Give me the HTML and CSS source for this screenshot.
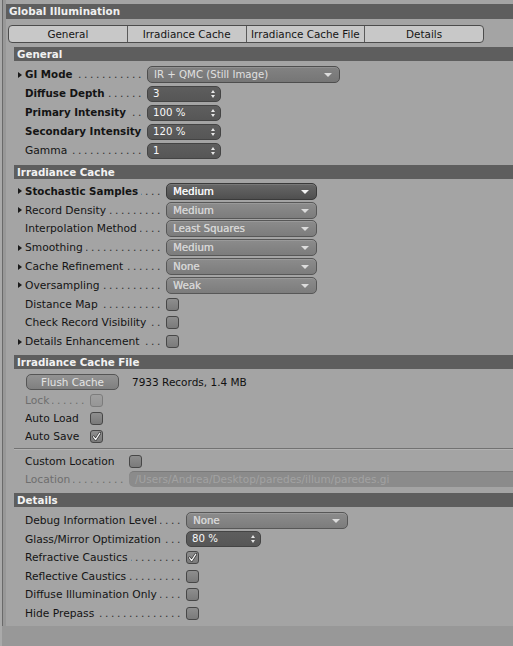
FILE: index.html
```
<!DOCTYPE html>
<html lang="en">
<head>
    <meta charset="UTF-8">
    <title>Global Illumination</title>
    <link rel="stylesheet" href="styles.css">
</head>
<body>
<div class="window">
    <div class="panel">
        <div class="title">Global Illumination</div>

        <div class="tabs">
            <div class="tab">General</div>
            <div class="tab">Irradiance Cache</div>
            <div class="tab">Irradiance Cache File</div>
            <div class="tab">Details</div>
        </div>

        <!-- General -->
        <div class="section sec-general">
            <div class="head">General</div>
            <div class="rows">
                <div class="row">
                    <span class="tw on"></span>
                    <span class="label bold"><span>GI Mode</span></span>
                    <div class="drop drop-gi" style="width: 193px">IR + QMC (Still Image)</div>
                </div>
                <div class="row">
                    <span class="tw"></span>
                    <span class="label bold"><span>Diffuse Depth</span></span>
                    <div class="num">3</div>
                </div>
                <div class="row">
                    <span class="tw"></span>
                    <span class="label bold"><span>Primary Intensity</span></span>
                    <div class="num">100 %</div>
                </div>
                <div class="row">
                    <span class="tw"></span>
                    <span class="label bold"><span>Secondary Intensity</span></span>
                    <div class="num">120 %</div>
                </div>
                <div class="row">
                    <span class="tw"></span>
                    <span class="label"><span>Gamma</span></span>
                    <div class="num">1</div>
                </div>
            </div>
        </div>

        <!-- Irradiance Cache -->
        <div class="section sec-irr">
            <div class="head">Irradiance Cache</div>
            <div class="rows">
                <div class="row">
                    <span class="tw on"></span>
                    <span class="label bold"><span>Stochastic Samples</span></span>
                    <div class="drop drop-dark" style="width: 151px">Medium</div>
                </div>
                <div class="row">
                    <span class="tw on"></span>
                    <span class="label"><span>Record Density</span></span>
                    <div class="drop" style="width: 151px">Medium</div>
                </div>
                <div class="row">
                    <span class="tw"></span>
                    <span class="label"><span>Interpolation Method</span></span>
                    <div class="drop" style="width: 151px">Least Squares</div>
                </div>
                <div class="row">
                    <span class="tw on"></span>
                    <span class="label"><span>Smoothing</span></span>
                    <div class="drop" style="width: 151px">Medium</div>
                </div>
                <div class="row">
                    <span class="tw on"></span>
                    <span class="label"><span>Cache Refinement</span></span>
                    <div class="drop" style="width: 151px">None</div>
                </div>
                <div class="row">
                    <span class="tw on"></span>
                    <span class="label"><span>Oversampling</span></span>
                    <div class="drop" style="width: 151px">Weak</div>
                </div>
                <div class="row">
                    <span class="tw"></span>
                    <span class="label"><span>Distance Map</span></span>
                    <span class="check"></span>
                </div>
                <div class="row">
                    <span class="tw"></span>
                    <span class="label"><span>Check Record Visibility</span></span>
                    <span class="check"></span>
                </div>
                <div class="row">
                    <span class="tw on"></span>
                    <span class="label"><span>Details Enhancement</span></span>
                    <span class="check"></span>
                </div>
            </div>
        </div>

        <!-- Irradiance Cache File -->
        <div class="section sec-file">
            <div class="head">Irradiance Cache File</div>
            <div class="rows">
                <div class="row">
                    <span class="tw"></span>
                    <div class="button">Flush Cache</div>
                    <span class="records">7933 Records, 1.4 MB</span>
                </div>
                <div class="row short">
                    <span class="tw"></span>
                    <span class="label disabled"><span>Lock</span></span>
                    <span class="check check-off"></span>
                </div>
                <div class="row short">
                    <span class="tw"></span>
                    <span class="label nodots"><span>Auto Load</span></span>
                    <span class="check"></span>
                </div>
                <div class="row short">
                    <span class="tw"></span>
                    <span class="label nodots"><span>Auto Save</span></span>
                    <span class="check checked"><svg viewBox="0 0 13 13" width="13" height="13"><path d="M3.6 6.8 L5.6 9.6 L9.8 3.2" fill="none" stroke="#2e2e2e" stroke-width="2.6" stroke-linecap="round" stroke-linejoin="round"/><path d="M3.6 6.8 L5.6 9.6 L9.8 3.2" fill="none" stroke="#f4f4f4" stroke-width="1.3" stroke-linecap="round" stroke-linejoin="round"/></svg></span>
                </div>
            </div>
            <div class="sep"></div>
            <div class="rows">
                <div class="row short">
                    <span class="tw"></span>
                    <span class="label label-wide nodots"><span>Custom Location</span></span>
                    <span class="check"></span>
                </div>
                <div class="row short">
                    <span class="tw"></span>
                    <span class="label label-wide disabled"><span>Location</span></span>
                    <div class="path">/Users/Andrea/Desktop/paredes/illum/paredes.gi</div>
                </div>
            </div>
        </div>

        <!-- Details -->
        <div class="section sec-details">
            <div class="head">Details</div>
            <div class="rows">
                <div class="row">
                    <span class="tw"></span>
                    <span class="label"><span>Debug Information Level</span></span>
                    <div class="drop" style="width: 162px">None</div>
                </div>
                <div class="row">
                    <span class="tw"></span>
                    <span class="label"><span>Glass/Mirror Optimization</span></span>
                    <div class="num" style="width: 75px">80 %</div>
                </div>
                <div class="row">
                    <span class="tw"></span>
                    <span class="label"><span>Refractive Caustics</span></span>
                    <span class="check checked"><svg viewBox="0 0 13 13" width="13" height="13"><path d="M3.6 6.8 L5.6 9.6 L9.8 3.2" fill="none" stroke="#2e2e2e" stroke-width="2.6" stroke-linecap="round" stroke-linejoin="round"/><path d="M3.6 6.8 L5.6 9.6 L9.8 3.2" fill="none" stroke="#f4f4f4" stroke-width="1.3" stroke-linecap="round" stroke-linejoin="round"/></svg></span>
                </div>
                <div class="row">
                    <span class="tw"></span>
                    <span class="label"><span>Reflective Caustics</span></span>
                    <span class="check"></span>
                </div>
                <div class="row">
                    <span class="tw"></span>
                    <span class="label"><span>Diffuse Illumination Only</span></span>
                    <span class="check"></span>
                </div>
                <div class="row">
                    <span class="tw"></span>
                    <span class="label"><span>Hide Prepass</span></span>
                    <span class="check"></span>
                </div>
            </div>
        </div>
    </div>
</div>
</body>
</html>
```

FILE: styles.css
```
body {
    margin: 0;
    background-color: #989898;
    font-family: 'DejaVu Sans', 'Noto Sans', sans-serif;
    font-size: 10.7px;
    color: #141414;
    border-left: 2px solid #aaaaaa;
    min-height: 646px;
    box-sizing: border-box;
    overflow: hidden;
}

.window {
    border-left: 1px solid #6a6a6a;
    padding-left: 3px;
}

.panel {
    background-color: #a4a4a4;
    padding: 4px 0 3px 0;
}

.title {
    height: 15px;
    line-height: 15px;
    background-color: #5e5e5e;
    color: #f0f0f0;
    font-weight: bold;
    font-size: 10.4px;
    padding-left: 3px;
}

/* Tab strip */
.tabs {
    display: flex;
    width: 476px;
    height: 18px;
    margin: 6px 0 0 2px;
    border: 1px solid #4c4c4c;
    border-radius: 4px;
    background-color: #c8c8c8;
    box-sizing: border-box;
    overflow: hidden;
    font-size: 10.4px;
}
.tab {
    flex: 1;
    text-align: center;
    line-height: 16px;
    color: #151515;
    border-left: 1px solid #5a5a5a;
}
.tab:first-child {
    border-left: none;
}

/* Sections */
.section {
    margin-left: 8px;
    margin-top: 4px;
}
.sec-irr,
.sec-details {
    margin-top: 5px;
}
.head {
    height: 14px;
    line-height: 14px;
    background-color: #5e5e5e;
    color: #f2f2f2;
    font-weight: bold;
    font-size: 10.3px;
    padding-left: 3px;
}
.rows {
    padding: 3px 0 0 4px;
}
.sec-general .rows,
.sec-details .rows {
    padding-top: 4px;
}
.row {
    display: flex;
    align-items: center;
    height: 19px;
}
.sec-irr .row {
    height: 18.8px;
}
.row.short {
    height: 18px;
}
.sec-details .row {
    height: 18.6px;
}

.tw {
    width: 7px;
    flex: none;
    display: flex;
    align-items: center;
}
.tw.on::before {
    content: '';
    border-left: 4px solid #1a1a1a;
    border-top: 3.5px solid transparent;
    border-bottom: 3.5px solid transparent;
}

/* Labels with dotted leaders, dots line up on the right */
.label {
    display: flex;
    flex: none;
    white-space: nowrap;
    padding-right: 3px;
    box-sizing: border-box;
    overflow: hidden;
}
.label::after {
    content: '..................................................';
    flex: 1 1 0;
    min-width: 0;
    overflow: hidden;
    direction: rtl;
    font-size: 10.7px;
    font-weight: normal;
    letter-spacing: 2.6px;
    margin-left: 3px;
    color: #333333;
}
.label.nodots::after {
    content: '';
}
.label.bold {
    font-weight: bold;
    font-size: 10.3px;
}
.label.disabled {
    color: #6e6e6e;
}
.label.disabled::after {
    color: #6e6e6e;
}

.sec-general .label { width: 122px; }
.sec-irr .label { width: 141px; }
.sec-file .label { width: 65px; }
.sec-file .label-wide { width: 104px; }
.sec-details .label { width: 161px; }

/* Dropdowns */
.drop {
    position: relative;
    height: 17px;
    line-height: 15px;
    box-sizing: border-box;
    border: 1px solid #575757;
    border-radius: 5px;
    background: linear-gradient(#8c8c8c, #7c7c7c);
    color: #d4d4d4;
    font-size: 10.2px;
    padding-left: 6px;
    box-shadow: inset 0 1px 0 rgba(255, 255, 255, 0.12);
    text-shadow: 0.3px 0 0 currentColor;
}
.drop::after {
    content: '';
    position: absolute;
    right: 7px;
    top: 6px;
    border-top: 4px solid #dcdcdc;
    border-left: 4px solid transparent;
    border-right: 4px solid transparent;
}
.drop-dark {
    background: linear-gradient(#676767, #4f4f4f);
    border-color: #3a3a3a;
    color: #f6f6f6;
}
.drop-dark::after {
    border-top-color: #f4f4f4;
}
.drop-gi {
    background: linear-gradient(#828282, #767676);
    border-color: #4e4e4e;
    color: #e0e0e0;
    text-shadow: none;
}

/* Number fields */
.num {
    position: relative;
    width: 74px;
    height: 16px;
    line-height: 14px;
    box-sizing: border-box;
    border: 1px solid #444444;
    border-radius: 5px;
    background: linear-gradient(#5e5e5e, #565656);
    color: #f8f8f8;
    font-size: 10.2px;
    padding-left: 5px;
}
.num::before,
.num::after {
    content: '';
    position: absolute;
    right: 5px;
    border-left: 2.5px solid transparent;
    border-right: 2.5px solid transparent;
}
.num::before {
    top: 3px;
    border-bottom: 3px solid #e8e8e8;
}
.num::after {
    top: 8px;
    border-top: 3px solid #e8e8e8;
}

/* Checkboxes */
.check {
    width: 13px;
    height: 13px;
    box-sizing: border-box;
    border: 1px solid #474747;
    border-radius: 3px;
    background: linear-gradient(#8e8e8e, #7a7a7a);
    display: flex;
    align-items: center;
    justify-content: center;
    flex: none;
}
.check svg {
    display: block;
    margin: -1px;
}
.check-off {
    border-color: #7c7c7c;
    background: linear-gradient(#a0a0a0, #969696);
}

/* File section */
.button {
    width: 93px;
    height: 16px;
    line-height: 14px;
    margin-left: 1px;
    box-sizing: border-box;
    border: 1px solid #555555;
    border-radius: 5px;
    background: linear-gradient(#939393, #7f7f7f);
    color: #e4e4e4;
    font-size: 10.4px;
    text-align: center;
}
.records {
    margin-left: 13px;
    color: #111111;
    font-size: 10.5px;
}
.sep {
    margin-top: 3px;
    height: 1px;
    background-color: #727272;
    border-bottom: 1px solid #b2b2b2;
}
.sec-file .sep + .rows {
    padding-top: 2px;
}
.path {
    flex: 1;
    height: 16px;
    line-height: 15px;
    box-sizing: border-box;
    border-radius: 5px 0 0 5px;
    background-color: #8b8b8b;
    border-top: 1px solid #7a7a7a;
    color: #a2a2a2;
    font-size: 10.5px;
    padding-left: 6px;
    white-space: nowrap;
    overflow: hidden;
}
```
